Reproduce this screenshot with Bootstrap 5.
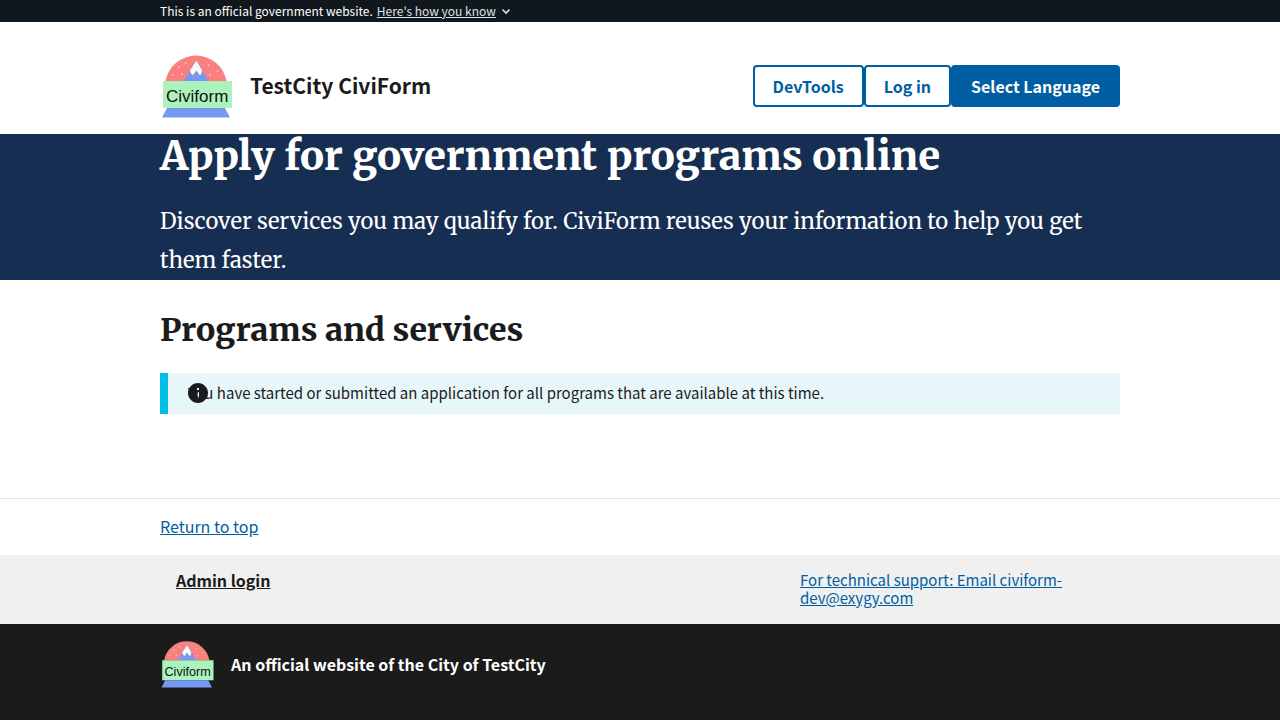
<!DOCTYPE html>
<html lang="en">
<head>
<meta charset="utf-8">
<meta name="viewport" content="width=device-width, initial-scale=1">
<title>TestCity CiviForm</title>
<link href="https://cdn.jsdelivr.net/npm/bootstrap@5.3.0/dist/css/bootstrap.min.css" rel="stylesheet">
<style>
  :root { --ink: #1b1b1b; --blue: #005ea2; --navy: #162e51; }
  body { font-family: "Source Sans Pro", "Noto Sans CJK SC", sans-serif; font-size: 15px; line-height: 18px; color: var(--ink); }
  .page-wrap { max-width: 1024px; padding-inline: 32px; margin-inline: auto; width: 100%; }
  .serif { font-family: Merriweather, "DejaVu Serif Condensed", "DejaVu Serif", serif; }
  .serif-heading { font-weight: 800; }
  .text-16 { font-size: 16px; }
  .gov-banner { background: #11181d; color: #fff; font-size: 12px; line-height: 22px; }
  .gov-banner button { color: #dfe1e2; line-height: 22px; }
  .site-title { font-size: 21px; line-height: 26px; padding-bottom: 2px; }
  .site-header { padding: 28px 0 12px; }
  .site-header .btn { --bs-btn-color: var(--blue); --bs-btn-border-color: var(--blue); --bs-btn-border-width: 2px; --bs-btn-hover-color: #1a4480; --bs-btn-hover-border-color: #1a4480; --bs-btn-padding-x: 18px; --bs-btn-padding-y: 10px; --bs-btn-font-size: 16px; --bs-btn-line-height: 18px; --bs-btn-font-weight: 700; --bs-btn-border-radius: 4px; }
  .site-header .btn-fill { --bs-btn-color: #fff; --bs-btn-bg: var(--blue); --bs-btn-hover-color: #fff; --bs-btn-hover-bg: #1a4480; }
  .hero { background: var(--navy); }
  .hero h1 { font-size: 40px; line-height: 44px; margin-bottom: 24px; }
  .hero p { font-size: 22px; line-height: 39px; }
  .programs { padding: 28px 0 84px; }
  .programs h2 { font-size: 32px; line-height: 44px; margin-bottom: 21px; }
  .notice { background: #e7f6f8; border-left: 8px solid #00bde3; padding: 7px 20px 9px; line-height: 25px; }
  .notice svg { left: 18px; top: 8px; }
  .link-blue { color: var(--blue); }
  .link-ink { color: var(--ink); }
  .back-top { border-top: 1px solid #dfe1e2; padding: 18px 0 20px; }
  .footer-links { background: #f0f0f0; padding: 16px 0 17px; }
  .footer-id { background: var(--ink); padding: 13px 0 26px; }
</style>
</head>
<body class="d-flex flex-column min-vh-100">
<svg class="d-none" aria-hidden="true">
  <symbol id="logo" viewBox="0 0 74 72">
    <path fill="#fa8080" d="M5.500 31A31 31 0 0 1 66.500 31z"/>
    <g fill="#fff" opacity=".85"><circle cx="13" cy="25" r=".8"/><circle cx="19" cy="17" r=".8"/><circle cx="22" cy="24" r=".8"/><circle cx="26" cy="13" r=".8"/><circle cx="48.500" cy="15" r=".8"/><circle cx="57.500" cy="21" r=".8"/><circle cx="50" cy="25" r=".8"/></g>
    <path fill="#7798f0" d="M36.500 10L48.500 31H23.500z"/>
    <path fill="#f8f8f8" stroke="#777" stroke-width=".4" d="M36.500 10L42.500 20.500 41.500 24.500 39.500 25.500 36.500 21 33 25.500 31 24 29.500 20.500z"/>
    <path fill="#acf2bd" d="M3 31h69v27H3z"/>
    <path fill="#7798f0" d="M7 58h58l5 9.500H2z"/>
    <text x="6" y="51.500" font-family="'Liberation Sans', sans-serif" font-size="17" fill="#111">Civiform</text>
  </symbol>
</svg>

<div class="gov-banner">
  <div class="page-wrap d-flex gap-1">
    <span>This is an official government website.</span>
    <button type="button" class="border-0 bg-transparent p-0 d-flex align-items-center" aria-expanded="false">
      <span class="text-decoration-underline">Here's how you know</span>
      <svg class="ms-1" width="12" height="12" viewBox="0 0 12 12" fill="none" stroke="currentColor" stroke-width="1.600" aria-hidden="true"><path d="M2.500 4.500L6 8l3.500-3.500"/></svg>
    </button>
  </div>
</div>

<header class="site-header">
  <div class="page-wrap d-flex align-items-center justify-content-between">
    <div class="d-flex align-items-center gap-3">
      <svg width="74" height="72" role="img" aria-label="Civiform"><use href="#logo"/></svg>
      <span class="site-title fw-bold">TestCity CiviForm</span>
    </div>
    <div class="d-flex">
      <button type="button" class="btn">DevTools</button>
      <button type="button" class="btn">Log in</button>
      <button type="button" class="btn btn-fill">Select Language</button>
    </div>
  </div>
</header>

<main>
  <section class="hero serif text-white">
    <div class="page-wrap">
      <h1 class="serif-heading">Apply for government programs online</h1>
      <p class="mb-0">Discover services you may qualify for. CiviForm reuses your information to help you get them faster.</p>
    </div>
  </section>
  <section class="programs">
    <div class="page-wrap">
      <h2 class="serif serif-heading">Programs and services</h2>
      <div class="notice position-relative">
        You have started or submitted an application for all programs that are available at this time.
        <svg class="position-absolute" width="24" height="24" viewBox="0 0 24 24" fill="#1b1b1b" aria-hidden="true"><path d="M12 2C6.480 2 2 6.480 2 12s4.480 10 10 10 10-4.480 10-10S17.520 2 12 2zm1 15h-2v-6h2v6zm0-8h-2V7h2v2z"/></svg>
      </div>
    </div>
  </section>
</main>

<footer class="d-flex flex-column flex-grow-1">
  <div class="back-top"><div class="page-wrap text-16"><a class="link-blue" href="#">Return to top</a></div></div>
  <div class="footer-links">
    <div class="page-wrap">
      <div class="row g-0">
        <div class="col-8 ps-3 text-16"><a class="link-ink fw-bold" href="#">Admin login</a></div>
        <div class="col-4 pe-3"><a class="link-blue" href="mailto:civiform-dev@exygy.com">For technical support: Email civiform-dev@exygy.com</a></div>
      </div>
    </div>
  </div>
  <div class="footer-id flex-grow-1 text-white">
    <div class="page-wrap d-flex align-items-center gap-3">
      <svg width="55" height="54" role="img" aria-label="Civiform"><use href="#logo"/></svg>
      <span class="fw-bold text-16">An official website of the City of TestCity</span>
    </div>
  </div>
</footer>
<script src="https://cdn.jsdelivr.net/npm/bootstrap@5.3.0/dist/js/bootstrap.bundle.min.js"></script>
</body>
</html>
